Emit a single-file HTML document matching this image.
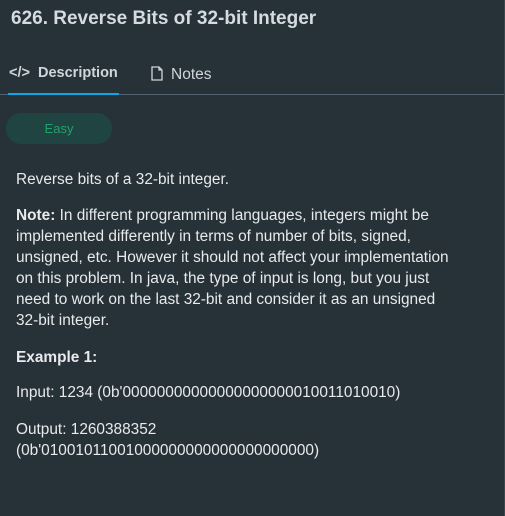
<!DOCTYPE html>
<html><head><meta charset="utf-8"><style>
html,body{margin:0;padding:0}
body{width:505px;height:516px;background:#273238;font-family:"Liberation Sans",sans-serif;color:#e8eaec;position:relative;overflow:hidden}
.t{position:absolute;left:11px;top:8px;font-size:19px;font-weight:bold;color:#d5dbe0;white-space:nowrap}
.tabs{position:absolute;left:0;top:94px;width:504px;height:1px;background:#536370}
.ul{position:absolute;left:8px;top:93px;width:111px;height:2px;background:#0ea5e9}
.tab{position:absolute;top:65px;font-size:14.5px;font-weight:bold;color:#d0d6dc;white-space:nowrap}
.easy{position:absolute;left:6px;top:113px;width:106px;height:31px;border-radius:15px;background:#1f4441;color:#1fa36a;font-size:13px;text-align:center;line-height:31px}
.c{position:absolute;left:16px;font-size:15.4px;line-height:21px;white-space:nowrap}
b{font-weight:bold}
.edge{position:absolute;right:0;top:0;width:1px;height:516px;background:#3b474f}
</style></head><body>
<div class="t">626. Reverse Bits of 32-bit Integer</div>
<div class="tab" style="left:9px">&lt;/&gt;&nbsp; Description</div>
<div class="tab" style="left:151px;font-weight:normal;font-size:15.5px;top:66px"><svg width="12" height="15" viewBox="0 0 12 15" style="vertical-align:-2px;margin-right:8px"><path d="M1 1h7l3 3v10H1z M8 1v3h3" fill="none" stroke="#d0d6dc" stroke-width="1.3"/></svg>Notes</div>
<div class="tabs"></div><div class="ul"></div>
<div class="easy">Easy</div>
<div class="c" style="top:169px">Reverse bits of a 32-bit integer.</div>
<div class="c" style="top:205px"><b>Note:</b> In different programming languages, integers might be<br>implemented differently in terms of number of bits, signed,<br>unsigned, etc. However it should not affect your implementation<br>on this problem. In java, the type of input is long, but you just<br>need to work on the last 32-bit and consider it as an unsigned<br>32-bit integer.</div>
<div class="c" style="top:347px"><b>Example 1:</b></div>
<div class="c" style="top:382px">Input: 1234 (0b'00000000000000000000010011010010)</div>
<div class="c" style="top:419px">Output: 1260388352<br>(0b'01001011001000000000000000000000)</div>
<div class="edge"></div>
</body></html>
